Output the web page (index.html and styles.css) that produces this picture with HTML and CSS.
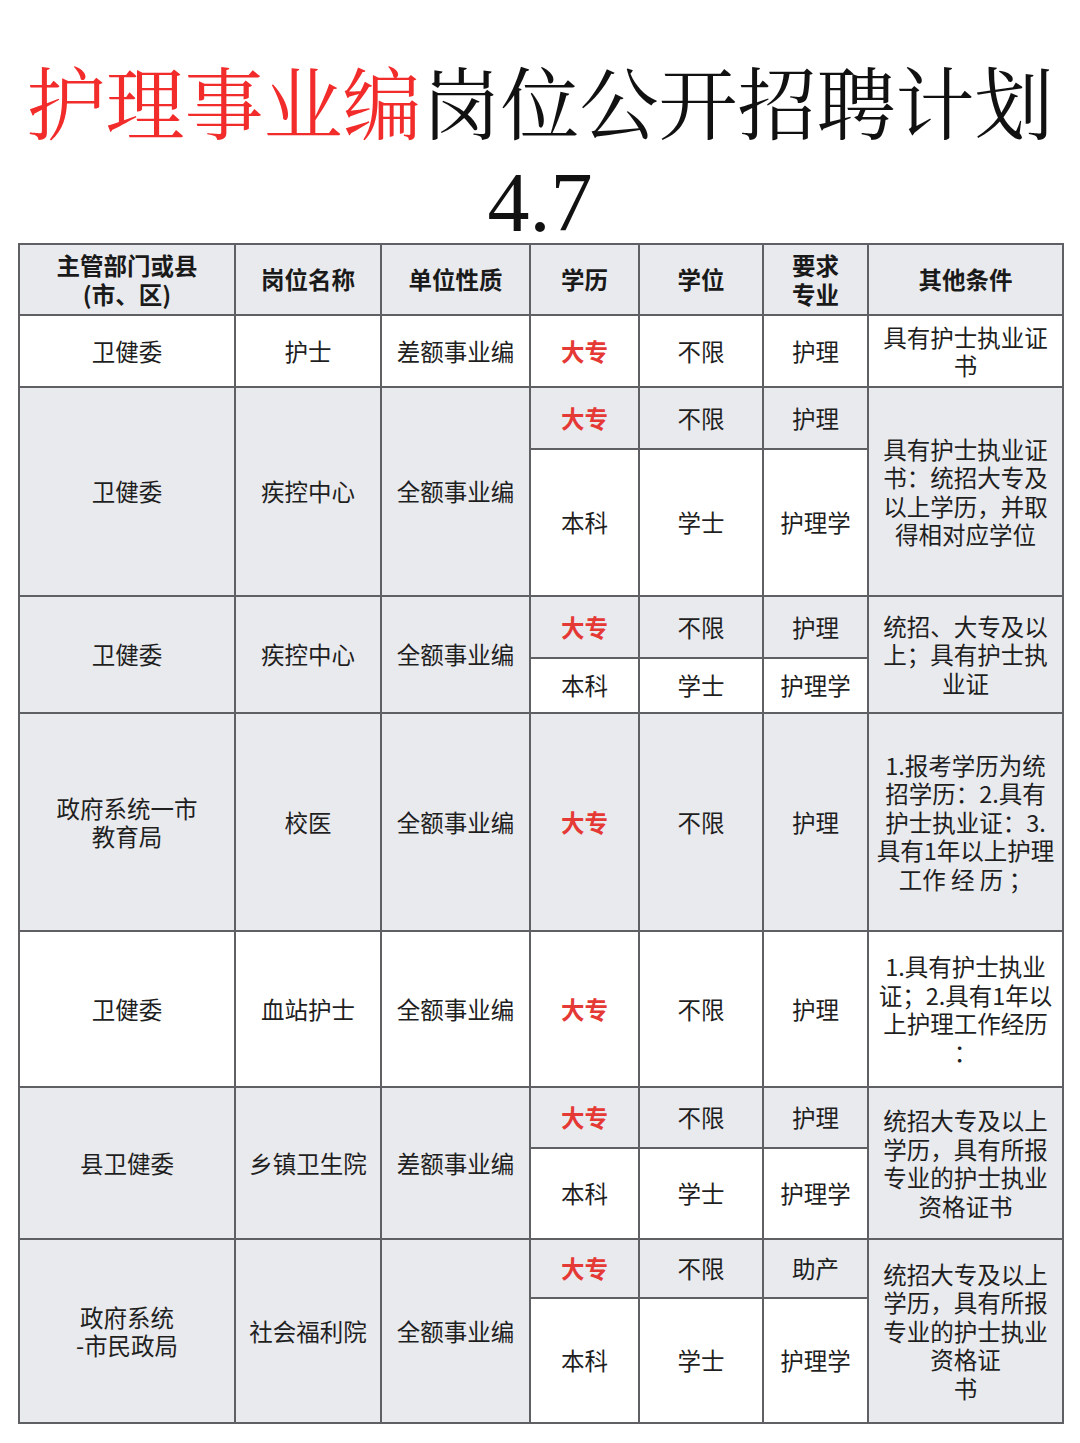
FILE: index.html
```html
<!DOCTYPE html>
<html lang="zh-CN">
<head>
<meta charset="utf-8">
<title>护理事业编岗位公开招聘计划</title>
<link rel="stylesheet" href="styles.css">
</head>
<body>
<div class="page">
  <h1 class="title"><span class="red">护理事业编</span>岗位公开招聘计划<br><span class="date">4.7</span></h1>
  <table class="plan">
    <colgroup>
      <col class="c1"><col class="c2"><col class="c3"><col class="c4"><col class="c5"><col class="c6"><col class="c7">
    </colgroup>
    <thead>
      <tr class="h71 grey">
        <th>主管部门或县<br>(市、区)</th>
        <th>岗位名称</th>
        <th>单位性质</th>
        <th>学历</th>
        <th>学位</th>
        <th>要求<br>专业</th>
        <th>其他条件</th>
      </tr>
    </thead>
    <tbody>
      <tr class="h72">
        <td>卫健委</td><td>护士</td><td>差额事业编</td><td class="hot">大专</td><td>不限</td><td>护理</td>
        <td class="cond">具有护士执业证<br>书</td>
      </tr>

      <tr class="h62 grey">
        <td rowspan="2">卫健委</td><td rowspan="2">疾控中心</td><td rowspan="2">全额事业编</td>
        <td class="hot">大专</td><td>不限</td><td>护理</td>
        <td class="cond" rowspan="2">具有护士执业证<br>书：统招大专及<br>以上学历，并取<br>得相对应学位</td>
      </tr>
      <tr class="h147 white">
        <td>本科</td><td>学士</td><td>护理学</td>
      </tr>

      <tr class="h62 grey">
        <td rowspan="2">卫健委</td><td rowspan="2">疾控中心</td><td rowspan="2">全额事业编</td>
        <td class="hot">大专</td><td>不限</td><td>护理</td>
        <td class="cond" rowspan="2">统招、大专及以<br>上；具有护士执<br>业证</td>
      </tr>
      <tr class="h55 white">
        <td>本科</td><td>学士</td><td>护理学</td>
      </tr>

      <tr class="h218 grey">
        <td>政府系统一市<br>教育局</td><td>校医</td><td>全额事业编</td><td class="hot">大专</td><td>不限</td><td>护理</td>
        <td class="cond">1.报考学历为统<br>招学历：2.具有<br>护士执业证：3.<br>具有1年以上护理<br>工作 经 历 ；</td>
      </tr>

      <tr class="h156 white">
        <td>卫健委</td><td>血站护士</td><td>全额事业编</td><td class="hot">大专</td><td>不限</td><td>护理</td>
        <td class="cond">1.具有护士执业<br>证；2.具有1年以<br>上护理工作经历<br>：</td>
      </tr>

      <tr class="h61 grey">
        <td rowspan="2">县卫健委</td><td rowspan="2">乡镇卫生院</td><td rowspan="2">差额事业编</td>
        <td class="hot">大专</td><td>不限</td><td>护理</td>
        <td class="cond" rowspan="2">统招大专及以上<br>学历，具有所报<br>专业的护士执业<br>资格证书</td>
      </tr>
      <tr class="h91 white">
        <td>本科</td><td>学士</td><td>护理学</td>
      </tr>

      <tr class="h59 grey">
        <td rowspan="2">政府系统<br>-市民政局</td><td rowspan="2">社会福利院</td><td rowspan="2">全额事业编</td>
        <td class="hot">大专</td><td>不限</td><td>助产</td>
        <td class="cond" rowspan="2">统招大专及以上<br>学历，具有所报<br>专业的护士执业<br>资格证<br>书</td>
      </tr>
      <tr class="h125 white">
        <td>本科</td><td>学士</td><td>护理学</td>
      </tr>
    </tbody>
  </table>
</div>
</body>
</html>
```

FILE: styles.css
```css
html, body {
  margin: 0;
  padding: 0;
  background: #ffffff;
}

.page {
  width: 1080px;
  min-height: 1443px;
  padding: 0 18px;
  box-sizing: border-box;
}

.title {
  margin: 0;
  padding-top: 52px;
  text-align: center;
  font-family: "Noto Serif CJK SC", "Source Han Serif SC", "AR PL UMing CN", "Liberation Serif", serif;
  font-weight: 400;
  font-size: 79px;
  line-height: 97px;
  color: #111111;
  height: 191px;
  white-space: nowrap;
}

.title .red {
  color: #f22b2b;
}

.title .date {
  font-family: "Liberation Serif", serif;
  font-size: 84px;
}

.plan {
  width: 1044px;
  table-layout: fixed;
  border-collapse: collapse;
  border: 2px solid #5f6063;
  font-family: "Noto Sans CJK SC", "Noto Sans", sans-serif;
  font-size: 23.5px;
  line-height: 28.5px;
  color: #1f1f1f;
}

.c1 { width: 216px; }
.c2 { width: 146px; }
.c3 { width: 149px; }
.c4 { width: 109px; }
.c5 { width: 124px; }
.c6 { width: 105px; }
.c7 { width: 195px; }

.plan th,
.plan td {
  border: 2px solid #5f6063;
  padding: 0 2px;
  text-align: center;
  vertical-align: middle;
  white-space: nowrap;
}

.plan th {
  font-weight: 700;
  color: #1a1a1a;
}

.grey td,
.grey th {
  background: #e9eaee;
}

.white td {
  background: #ffffff;
}

.plan td.hot {
  color: #e53935;
  font-weight: 700;
}

.h71 { height: 71px; }
.h72 { height: 72px; }
.h62 { height: 62px; }
.h147 { height: 147px; }
.h55 { height: 55px; }
.h218 { height: 218px; }
.h156 { height: 156px; }
.h61 { height: 61px; }
.h91 { height: 91px; }
.h59 { height: 59px; }
.h125 { height: 125px; }
```
